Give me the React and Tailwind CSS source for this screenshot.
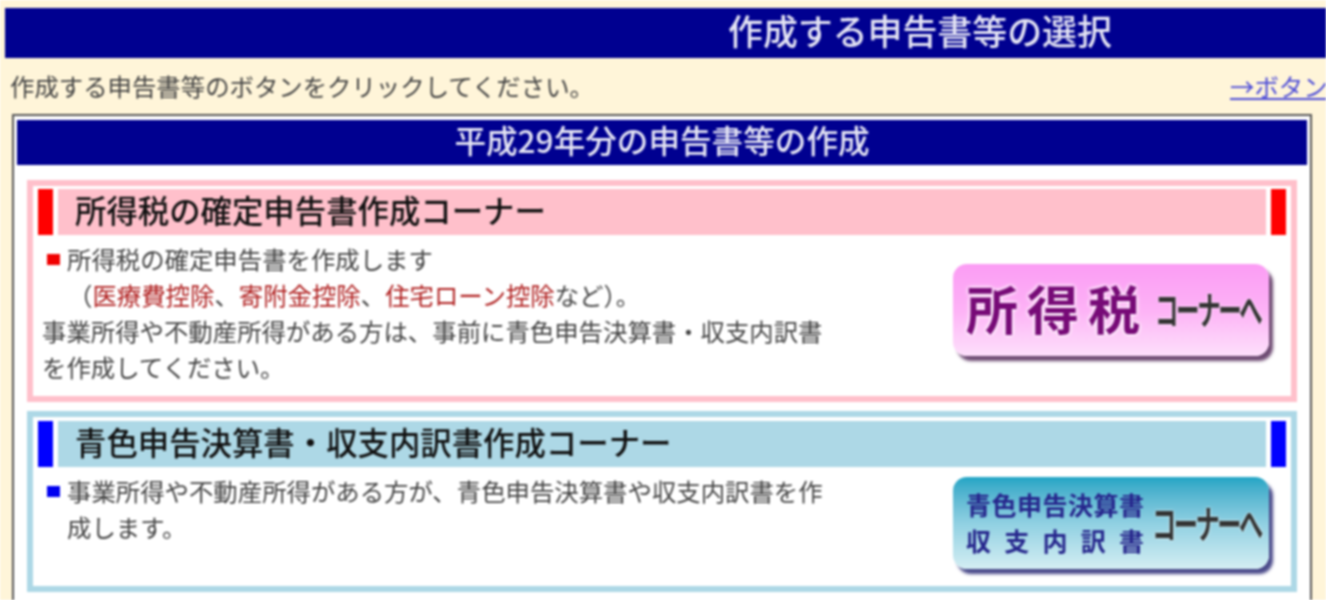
const cjk = "font-['Noto_Sans_CJK_JP','Liberation_Sans',sans-serif]";

function Square({ className }) {
  return <span className={`inline-block w-[13px] h-[11px] shrink-0 ${className}`} />;
}

function SectionHead({ title, bar, strip }) {
  return (
    <div className="flex h-[46px] items-stretch justify-between">
      <div className={`w-[15px] ${bar}`} />
      <div className={`flex-1 ml-[5px] mr-[5px] pl-[17px] pb-[4px] flex items-center ${strip}`}>
        <span className="text-[31.4px] leading-none text-[#111] font-medium whitespace-nowrap">{title}</span>
      </div>
      <div className={`w-[15px] ${bar}`} />
    </div>
  );
}

function Red({ children }) {
  return <span className="text-[#b02020]">{children}</span>;
}

function TaxButton() {
  return (
    <div className="w-[316px] h-[92px] rounded-[14px] bg-gradient-to-b from-[#fb9cf4] via-[#fdb2f6] to-[#fde0fb] shadow-[4px_5px_3px_#6d4a72] flex items-center pl-[13px] pb-[4px] overflow-hidden">
      <span className="text-[52px] leading-none font-bold text-[#770a77] tracking-[9px] whitespace-nowrap [text-shadow:0_0_4px_#fff,0_0_4px_#fff]">所得税</span>
      <span className="ml-[6px] text-[38px] leading-none text-[#333] tracking-[-4px] scale-x-[0.62] origin-left whitespace-nowrap font-bold [text-shadow:0_0_3px_#fff]">コーナーへ</span>
    </div>
  );
}

function BlueButton() {
  return (
    <div className="w-[316px] h-[92px] rounded-[14px] bg-gradient-to-b from-[#1fa5c5] via-[#8fd0e2] to-[#d4eef3] shadow-[4px_5px_3px_#4a4a8a] flex items-center pl-[13px] pb-[2px] overflow-hidden">
      <div className="flex flex-col gap-[11px] w-[178px] text-[#26268c] font-bold leading-none whitespace-nowrap">
        <span className="text-[25px] tracking-[0.5px]">青色申告決算書</span>
        <span className="text-[25px] flex justify-between"><span>収</span><span>支</span><span>内</span><span>訳</span><span>書</span></span>
      </div>
      <span className="ml-[8px] text-[38px] leading-none text-[#333] tracking-[-4px] scale-x-[0.64] origin-left whitespace-nowrap font-bold [text-shadow:0_0_3px_#fff]">コーナーへ</span>
    </div>
  );
}

export default function App() {
  return (
    <div className={`w-[1326px] h-[600px] overflow-hidden bg-[#fff5d9] pt-[8px] pl-[5px] blur-[1px] ${cjk}`}>
      <div className="h-[50px] bg-[#000090] flex items-center pl-[723px] pb-[5px]">
        <span className="text-[34.9px] leading-none text-[#e4e4f4] font-medium whitespace-nowrap">作成する申告書等の選択</span>
      </div>
      <div className="h-[56px] flex items-center justify-between pl-[5px] text-[24.4px] text-[#444] whitespace-nowrap overflow-hidden">
        <span>作成する申告書等のボタンをクリックしてください。</span>
        <a className="text-[#4a4ad8] underline shrink-0 w-[96px] overflow-hidden">→ボタンの説明</a>
      </div>
      <div className="ml-[7px] w-[1300px] h-[600px] border-2 border-[#555] bg-white p-[3px] pt-[4px]">
        <div className="h-[45px] bg-[#000090] flex items-center justify-center pb-[5px]">
          <span className="text-[31.6px] leading-none text-[#e4e4f4] font-medium whitespace-nowrap">平成29年分の申告書等の作成</span>
        </div>
        <div className="mt-[15px] mx-[10px] flex flex-col gap-[9px]">
          <section className="h-[222px] border-[6px] border-[#ffc0cb] px-[5px] pt-[3px]">
            <SectionHead title="所得税の確定申告書作成コーナー" bar="bg-[#ff0000]" strip="bg-[#ffc0cb]" />
            <div className="flex justify-between">
              <div className="pt-[6px] text-[24.4px] leading-[36px] text-[#444] whitespace-nowrap">
                <div className="flex items-center pl-[9px]"><Square className="bg-[#f00000] mr-[7px]" />所得税の確定申告書を作成します</div>
                <div className="pl-[30px]">（<Red>医療費控除</Red>、<Red>寄附金控除</Red>、<Red>住宅ローン控除</Red>など）。</div>
                <div className="pl-[4px]">事業所得や不動産所得がある方は、事前に青色申告決算書・収支内訳書</div>
                <div className="pl-[4px]">を作成してください。</div>
              </div>
              <div className="pt-[29px] pr-[17px]"><TaxButton /></div>
            </div>
          </section>
          <section className="h-[181px] border-[6px] border-[#add8e6] px-[5px] pt-[4px]">
            <SectionHead title="青色申告決算書・収支内訳書作成コーナー" bar="bg-[#0000ff]" strip="bg-[#add8e6]" />
            <div className="flex justify-between">
              <div className="pt-[6px] text-[24.4px] leading-[36px] text-[#444] whitespace-nowrap">
                <div className="flex items-center pl-[9px]"><Square className="bg-[#0000f0] mr-[7px]" />事業所得や不動産所得がある方が、青色申告決算書や収支内訳書を作</div>
                <div className="pl-[29px]">成します。</div>
              </div>
              <div className="pt-[10px] pr-[17px]"><BlueButton /></div>
            </div>
          </section>
        </div>
      </div>
    </div>
  );
}
